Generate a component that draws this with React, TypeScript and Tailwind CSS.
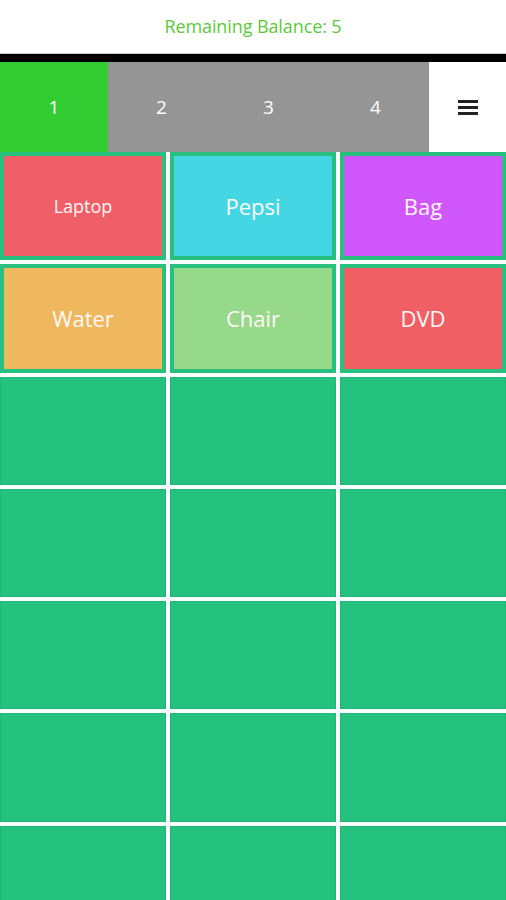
import React from "react";

const items: { label: string; bg: string; small?: boolean }[] = [
  { label: "Laptop", bg: "bg-[#f05f67]", small: true },
  { label: "Pepsi", bg: "bg-[#44d7e3]" },
  { label: "Bag", bg: "bg-[#cf57fb]" },
  { label: "Water", bg: "bg-[#f0b85e]" },
  { label: "Chair", bg: "bg-[#97d98b]" },
  { label: "DVD", bg: "bg-[#f05f63]" },
];

export default function App() {
  const empties = Array.from({ length: 15 });
  return (
    <div className="w-[506px] h-[900px] overflow-hidden bg-white font-['Open_Sans',sans-serif]">
      <div className="h-[53px] flex items-center justify-center">
        <span className="text-[#5cc93a] text-[18px] tracking-[-0.1px]">Remaining Balance: 5</span>
      </div>
      <div className="h-[1px] bg-[#c8c8c8]" />
      <div className="h-[8px] bg-black" />
      <div className="h-[90px] flex text-white text-[19px] font-medium">
        <div className="w-[108px] bg-[#33cc33] flex items-center justify-center">1</div>
        <div className="w-[107px] bg-[#959595] flex items-center justify-center">2</div>
        <div className="w-[107px] bg-[#959595] flex items-center justify-center">3</div>
        <div className="w-[107px] bg-[#959595] flex items-center justify-center">4</div>
        <div className="flex-1 bg-white flex items-center justify-center">
          <div className="flex flex-col gap-[3px] w-[20px]">
            <div className="h-[3px] bg-[#222]" />
            <div className="h-[3px] bg-[#222]" />
            <div className="h-[3px] bg-[#222]" />
          </div>
        </div>
      </div>
      <div className="grid grid-cols-[166px_166px_166px] auto-rows-[108.3px] gap-x-[4px] gap-y-[4px]">
        {items.map((it) => (
          <div key={it.label} className="bg-[#26c07f] p-[4px]">
            <div
              className={`${it.bg} h-full flex items-center justify-center text-[#fff8f6] font-medium ${
                it.small ? "text-[18px]" : "text-[22px]"
              }`}
            >
              {it.label}
            </div>
          </div>
        ))}
        {empties.map((_, i) => (
          <div key={i} className="bg-[#25c17f] border border-[#1fb574]" />
        ))}
      </div>
    </div>
  );
}
